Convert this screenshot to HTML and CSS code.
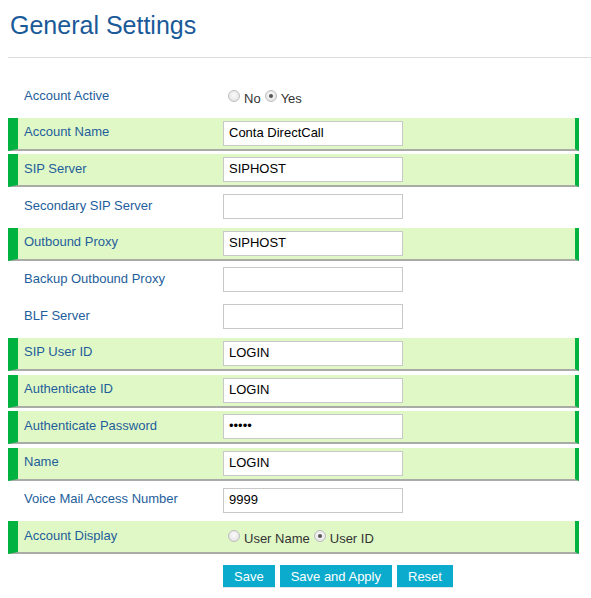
FILE: index.html
```html
<!DOCTYPE html>
<html>
<head>
<meta charset="utf-8">
<link rel="stylesheet" href="styles.css">
</head>
<body>
<div class="page">
  <h1 class="title">General Settings</h1>
  <div class="rule"></div>
  <div class="form">
    <div class="row">
      <div class="label">Account Active</div>
      <div class="field radios"><span class="radio"></span><span class="rtext">No</span><span class="radio on"></span><span class="rtext">Yes</span></div>
    </div>
    <div class="row hl">
      <div class="label">Account Name</div>
      <div class="field"><div class="input">Conta DirectCall</div></div>
    </div>
    <div class="row hl">
      <div class="label">SIP Server</div>
      <div class="field"><div class="input">SIPHOST</div></div>
    </div>
    <div class="row">
      <div class="label">Secondary SIP Server</div>
      <div class="field"><div class="input"></div></div>
    </div>
    <div class="row hl">
      <div class="label">Outbound Proxy</div>
      <div class="field"><div class="input">SIPHOST</div></div>
    </div>
    <div class="row">
      <div class="label">Backup Outbound Proxy</div>
      <div class="field"><div class="input"></div></div>
    </div>
    <div class="row">
      <div class="label">BLF Server</div>
      <div class="field"><div class="input"></div></div>
    </div>
    <div class="row hl">
      <div class="label">SIP User ID</div>
      <div class="field"><div class="input">LOGIN</div></div>
    </div>
    <div class="row hl">
      <div class="label">Authenticate ID</div>
      <div class="field"><div class="input">LOGIN</div></div>
    </div>
    <div class="row hl">
      <div class="label">Authenticate Password</div>
      <div class="field"><div class="input pw">•••••</div></div>
    </div>
    <div class="row hl">
      <div class="label">Name</div>
      <div class="field"><div class="input">LOGIN</div></div>
    </div>
    <div class="row">
      <div class="label">Voice Mail Access Number</div>
      <div class="field"><div class="input">9999</div></div>
    </div>
    <div class="row hl">
      <div class="label">Account Display</div>
      <div class="field radios"><span class="radio"></span><span class="rtext">User Name</span><span class="radio on"></span><span class="rtext">User ID</span></div>
    </div>
  </div>
  <div class="buttons">
    <button class="btn">Save</button>
    <button class="btn">Save and Apply</button>
    <button class="btn">Reset</button>
  </div>
</div>
</body>
</html>
```
FILE: styles.css
```css
* { box-sizing: border-box; }
html, body { margin: 0; padding: 0; background: #fff; }
body { font-family: "Liberation Sans", Arial, sans-serif; }
.page { padding: 10px 0 0 8px; width: 591px; }
.title {
  margin: 0 0 0 2px;
  font-size: 25px;
  font-weight: normal;
  color: #1a5a98;
  line-height: 30px;
}
.rule { height: 1px; background: #dcdcdc; margin-top: 17px; }
.form { margin-top: 23px; width: 571px; }
.row {
  display: flex;
  align-items: center;
  height: 33px;
  margin-bottom: 3.7px;
  border-left: 10px solid transparent;
  border-right: 4px solid transparent;
  border-bottom: 2px solid transparent;
}
.row.hl {
  background: #e0f8c6;
  border-left-color: #00b23f;
  border-right-color: #00b23f;
  border-bottom-color: #a9aba6;
}
.label {
  width: 205px;
  padding-left: 6px;
  font-size: 13px;
  color: #1e5e9b;
  margin-top: -3px;
}
.field { display: flex; align-items: center; }
.input {
  width: 180px;
  height: 25px;
  border: 1px solid #c8c8c8;
  background: #fff;
  font-size: 13px;
  color: #000;
  padding-left: 5px;
  line-height: 22px;
}
.input.pw { font-size: 13px; letter-spacing: 0; }
.radios { padding-left: 5px; font-size: 13px; color: #333; margin-top: 3px; }
.radio {
  display: inline-block;
  width: 12px;
  height: 12px;
  border-radius: 50%;
  border: 1px solid #bdbdbd;
  background: radial-gradient(circle at 50% 40%, #fafafa 0%, #dedede 100%);
  margin-right: 4px;
  position: relative;
  top: -2px;
}
.radio.on::after {
  content: "";
  position: absolute;
  left: 3px; top: 3px;
  width: 4px; height: 4px;
  border-radius: 50%;
  background: #555;
}
.rtext { margin-right: 4px; }
.buttons { display: flex; gap: 5px; margin-top: 11px; padding-left: 215px; }
.btn {
  height: 23px;
  border: none;
  background: #0aabcd;
  color: #fff;
  font-family: "Liberation Sans", Arial, sans-serif;
  font-size: 13px;
  padding: 0 11px;
  border-bottom: 1px solid #dfe7ea;
}
```
